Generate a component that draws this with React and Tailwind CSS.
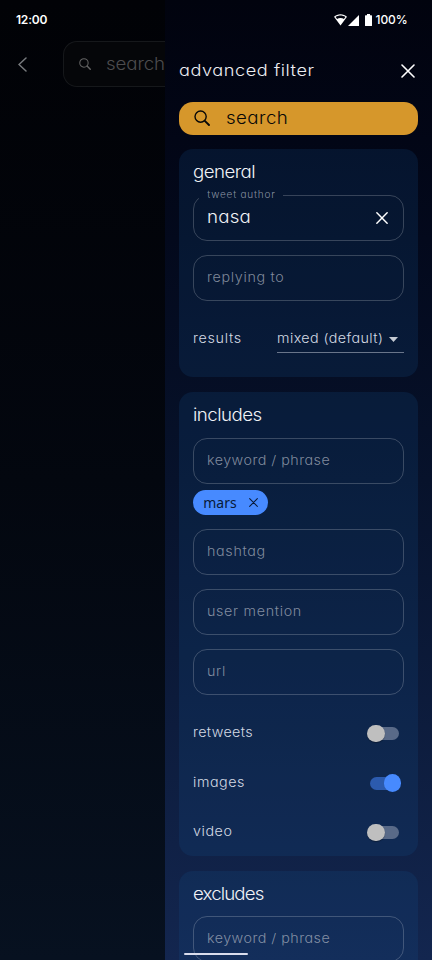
import React from "react";

function Close({ size, className = "", width = 1.6 }) {
  return (
    <svg width={size} height={size} viewBox="0 0 14 14" fill="none" stroke="currentColor" strokeWidth={width} strokeLinecap="round" className={className}>
      <path d="M1 1 13 13M13 1 1 13" />
    </svg>
  );
}

function Magnifier({ size, className = "" }) {
  return (
    <svg width={size} height={size} viewBox="0 0 16 16" fill="none" stroke="currentColor" strokeWidth="1.4" strokeLinecap="round" className={className}>
      <circle cx="6.6" cy="6.6" r="5.6" />
      <path d="M10.8 10.8 15 15" strokeWidth="1.9" />
    </svg>
  );
}

// Slightly widened lettering used for every label of the app.
function Wide({ className = "", children }) {
  return <span className={"inline-block origin-left scale-x-110 whitespace-nowrap " + className}>{children}</span>;
}

function StatusBar() {
  return (
    <div className="absolute inset-x-0 top-0 z-20 flex h-10 items-center justify-between pl-4 pr-[24.500px] text-white">
      <span className="text-[12px] font-semibold leading-none tracking-[-0.2px]">12:00</span>
      <div className="flex items-center">
        <svg width="13" height="12" viewBox="0 0 13 12" fill="currentColor">
          <path d="M6.5.3C4 .3 1.700 1.200 0 2.700L6.500 11.500 13 2.700C11.300 1.200 9 .3 6.500.3Zm0 1.100c1.800 0 3.400.5 4.900 1.500l-1.500 2.100C9 4.300 7.800 4 6.500 4s-2.500.3-3.400 1L1.600 2.900C3.100 1.900 4.700 1.400 6.500 1.400Z" fillRule="evenodd" />
        </svg>
        <svg width="11" height="11" viewBox="0 0 11 11" fill="currentColor" className="ml-[1.500px]">
          <path d="M11 0V11H0Z" />
        </svg>
        <svg width="7" height="12" viewBox="0 0 7 12" fill="currentColor" className="ml-[6px]">
          <path d="M2 0h3v1.200h1.400q.6 0 .6.6v9.600q0 .6-.6.6H.6Q0 12 0 11.400V1.800q0-.6.6-.6H2Z" />
        </svg>
        <span className="ml-[3.500px] text-[12px] font-medium leading-none tracking-[-0.1px]">100%</span>
      </div>
    </div>
  );
}

function Field({ label, className = "", tracking = "tracking-[0.6px]" }) {
  return (
    <div className={"flex h-[46px] shrink-0 items-center rounded-[14px] border border-white/20 px-[13.500px] text-[13px] text-[#a9b0be]/75 " + className}>
      <Wide className={"pb-[1px] " + tracking}>{label}</Wide>
    </div>
  );
}

function Toggle({ label, on, tracking = "tracking-[0.5px]" }) {
  return (
    <div className="flex h-[49.400px] items-center justify-between pr-[3px]">
      <Wide className={"pb-[1px] text-[13px] text-[#d3d9e3] " + tracking}>{label}</Wide>
      <div className="flex w-[35px] items-center">
        {on ? (
          <>
            <div className="ml-[4px] h-[13px] w-[24px] rounded-full bg-[#2c5bae]" />
            <div className="-ml-[9px] h-[17.500px] w-[17.500px] shrink-0 rounded-full bg-[#478aff]" />
          </>
        ) : (
          <>
            <div className="z-10 ml-[1px] h-[17.500px] w-[17.500px] shrink-0 rounded-full bg-[#bfbfbf] shadow-[0_1px_1px_rgba(0,0,0,0.3)]" />
            <div className="-ml-[9px] h-[13px] w-[23px] rounded-full bg-[#596a88]" />
          </>
        )}
      </div>
    </div>
  );
}

function Card({ title, titleClass, className = "", children }) {
  return (
    <section className={"flex shrink-0 flex-col rounded-[14px] bg-[#12508c]/20 px-[14px] " + className}>
      <h2 className="mt-[11px] h-[22px] text-[17px] leading-[25px] text-[#f0f2f6]">
        <Wide className={titleClass}>{title}</Wide>
      </h2>
      {children}
    </section>
  );
}

export default function App() {
  return (
    <div className="relative flex h-[960px] w-[432px] overflow-hidden bg-[#010207] font-['Inter',sans-serif] font-light [font-feature-settings:'cv11','ss03']">
      <StatusBar />

      <div className="h-full w-[164.500px] shrink-0 overflow-hidden bg-linear-to-b from-[#010206] via-[#03070f] to-[#071120]">
        <div className="mt-[41px] flex items-center">
          <svg width="9" height="15" viewBox="0 0 9 15" fill="none" stroke="#777a7d" strokeWidth="1.500" strokeLinecap="round" className="ml-[18px] shrink-0">
            <path d="M8 1 1 7.500 8 14" />
          </svg>
          <div className="ml-[36px] flex h-[46px] w-[138px] shrink-0 items-center rounded-l-[14px] border border-r-0 border-[#16181b] bg-[#050609]">
            <Magnifier size={12} className="ml-[15px] shrink-0 text-[#646464]" />
            <Wide className="ml-[14.500px] pt-[1px] text-[17px] tracking-[-0.1px] text-[#4c4c4e]">search</Wide>
          </div>
        </div>
      </div>

      <main className="flex h-full w-[267.500px] shrink-0 flex-col overflow-hidden bg-linear-to-b from-[#01030e] via-[#07122b] to-[#13264f] pl-[14.200px] pr-[14px]">
        <header className="mt-[59px] flex h-[24px] shrink-0 items-center justify-between pr-[3px]">
          <h1 className="pb-[2px] text-[16.500px] text-[#edeef2]">
            <Wide className="tracking-[0.5px]">advanced filter</Wide>
          </h1>
          <Close size={14} className="text-white" />
        </header>

        <button className="mt-[18.600px] flex h-[33.400px] shrink-0 items-center rounded-[14px] bg-[#d6972b] pl-[15px] text-[#080808]">
          <Magnifier size={16} />
          <Wide className="ml-[16.500px] text-[17px] tracking-[0.4px]">search</Wide>
        </button>

        <Card title="general" titleClass="tracking-[-0.5px]" className="mt-[14.500px] h-[228px]">
          <fieldset className="mt-[3.700px] flex h-[55px] shrink-0 items-start justify-between rounded-[14px] border border-white/20 pl-[13.500px] pr-[15px]">
            <legend className="-ml-[8.500px] h-[18px] pl-[8.500px] pr-[7px] text-[10px] leading-[17px] tracking-[0.8px] text-[#a9b0be]/80">tweet author</legend>
            <Wide className="mt-[2px] text-[17px] leading-[22px] tracking-[0.2px] text-[#f0f2f6]">nasa</Wide>
            <Close size={12} width={1.700} className="mt-[8px] text-white" />
          </fieldset>
          <Field label="replying to" className="mt-[13.600px]" />
          <div className="mt-[23.200px] flex items-start justify-between text-[13px] text-[#d3d9e3]">
            <Wide className="mt-[5px] tracking-[0.6px]">results</Wide>
            <div className="flex h-[29.500px] w-[127px] items-center justify-between border-b border-[#69758a] pr-[6px]">
              <Wide className="pt-[1px] tracking-[0.38px]">mixed (default)</Wide>
              <svg width="9" height="5" viewBox="0 0 9 5" fill="#c5cad3" className="mt-[2px]"><path d="M0 0h9L4.500 5Z" /></svg>
            </div>
          </div>
        </Card>

        <Card title="includes" titleClass="tracking-[-0.5px]" className="mt-[14.500px] h-[464.300px]">
          <Field label="keyword / phrase" tracking="tracking-[0.42px]" className="mt-[13px]" />
          <div className="mt-[6.500px] flex h-[24.500px] w-[75.500px] shrink-0 items-center justify-between rounded-full bg-[#478aff] pl-[10.500px] pr-[10px] text-[#081a38]">
            <span className="font-['Noto_Sans',sans-serif] text-[14px] font-normal">mars</span>
            <Close size={9} width={1.600} />
          </div>
          <Field label="hashtag" className="mt-[14px]" />
          <Field label="user mention" className="mt-[14px]" />
          <Field label="url" className="mt-[14px]" />
          <div className="mt-[14px]">
            <Toggle label="retweets" tracking="tracking-[0.3px]" />
            <Toggle label="images" on />
            <Toggle label="video" />
          </div>
        </Card>

        <Card title="excludes" titleClass="tracking-[-0.8px]" className="mt-[14.500px] h-[200px]">
          <Field label="keyword / phrase" tracking="tracking-[0.42px]" className="mt-[12.700px]" />
        </Card>
      </main>

      <div className="absolute left-[184px] top-[953px] h-[2px] w-[64px] rounded-full bg-[#d9dded]" />
    </div>
  );
}
